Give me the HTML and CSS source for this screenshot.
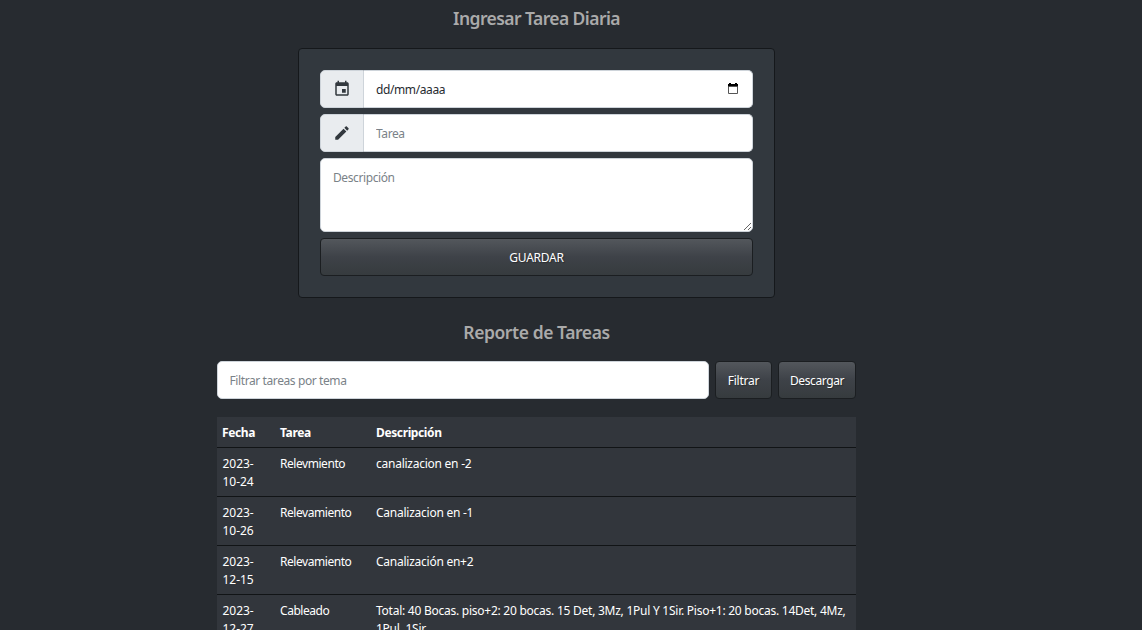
FILE: index.html
```
<!DOCTYPE html>
<html lang="es">
<head>
<meta charset="utf-8">
<title>Tareas</title>
<link rel="stylesheet" href="styles.css">
</head>
<body>
<main class="page">
  <h1 class="title entry">Ingresar Tarea Diaria</h1>
  <form class="card">
    <div class="group">
      <span class="addon"><svg class="icon" viewBox="0 0 24 24"><path d="M17 12h-5v5h5v-5zM16 1v2H8V1H6v2H5c-1.110 0-1.990.9-1.990 2L3 19c0 1.100.890 2 2 2h14c1.100 0 2-.9 2-2V5c0-1.100-.9-2-2-2h-1V1h-2zm3 18H5V8h14v11z"/></svg></span>
      <div class="field date">
        <span class="date-text">dd/mm/aaaa</span>
        <svg class="picker" viewBox="0 0 10 11"><path d="M1 0h2v1h4V0h2v1h1v3H0V1h1z"/><path class="picker-frame" d="M.5 3.500h9v7h-9z"/></svg>
      </div>
    </div>
    <div class="group">
      <span class="addon"><svg class="icon" viewBox="0 0 24 24"><path d="M3 17.250V21h3.750L17.810 9.940l-3.750-3.750L3 17.250zM20.710 7.040c.39-.39.39-1.020 0-1.410l-2.340-2.340c-.39-.39-1.020-.39-1.410 0l-1.830 1.830 3.750 3.750 1.830-1.830z"/></svg></span>
      <input class="field task" type="text" placeholder="Tarea">
    </div>
    <textarea class="field area" placeholder="Descripción"></textarea>
    <button class="btn save" type="button">GUARDAR</button>
  </form>
  <h2 class="title report">Reporte de Tareas</h2>
  <section class="results">
    <div class="filter">
      <input class="field search" type="text" placeholder="Filtrar tareas por tema">
      <button class="btn filter-btn" type="button">Filtrar</button>
      <button class="btn download" type="button">Descargar</button>
    </div>
    <table class="table">
      <colgroup><col class="c-date"><col class="c-task"><col></colgroup>
      <thead><tr><th>Fecha</th><th>Tarea</th><th>Descripción</th></tr></thead>
      <tbody>
        <tr><td>2023-<br>10-24</td><td>Relevmiento</td><td>canalizacion en -2</td></tr>
        <tr><td>2023-<br>10-26</td><td>Relevamiento</td><td>Canalizacion en -1</td></tr>
        <tr><td>2023-<br>12-15</td><td>Relevamiento</td><td>Canalización en+2</td></tr>
        <tr><td>2023-<br>12-27</td><td>Cableado</td><td>Total: 40 Bocas. piso+2: 20 bocas. 15 Det, 3Mz, 1Pul Y 1Sir. Piso+1: 20 bocas. 14Det, 4Mz,<br>1Pul, 1Sir</td></tr>
      </tbody>
    </table>
  </section>
</main>
</body>
</html>
```
FILE: styles.css
```
* { box-sizing: border-box; }
html, body { height: 100%; overflow: hidden; }
body {
  margin: 0;
  background: #272b30;
  color: #fff;
  font: 12px/18px "Segoe UI", "Noto Sans", "Open Sans", sans-serif;
  letter-spacing: -0.25px;
}
.page { width: 1073px; display: flex; flex-direction: column; align-items: center; padding-top: 7px; }
.title { margin: 0; height: 22px; font-size: 17.5px; line-height: 22px; font-weight: 560; color: #aaa; letter-spacing: -0.43px; }
.entry { letter-spacing: -0.57px; }
.card {
  width: 477px; margin-top: 19px; padding: 21px;
  display: flex; flex-direction: column; gap: 6px;
  background: #32383e; border: 1px solid #15181b; border-radius: 4px;
}
.group { display: flex; height: 38px; }
.addon {
  width: 44px; flex: none; display: flex; align-items: center; justify-content: center;
  background: #e9ecef; border: 1px solid #ced4da; border-radius: 5px 0 0 5px;
}
.icon { width: 18px; height: 18px; fill: #32383e; }
.field {
  flex: 1; min-width: 0; height: 38px; padding: 0 12px; display: block;
  background: #fff; color: #272b30; border: 1px solid #ced4da; border-radius: 5px;
  font: inherit; letter-spacing: inherit; outline: 0;
}
.field::placeholder { color: #7a8288; opacity: 1; letter-spacing: -0.4px; }
.group .field { border-left: 0; border-radius: 0 5px 5px 0; }
.group .date { display: flex; align-items: center; justify-content: space-between; padding-top: 2px; letter-spacing: -0.4px; }
.picker { width: 10px; height: 11px; margin: 0 2px 3px 0; }
.picker-frame { fill: none; stroke: #555; }
.area { flex: none; width: 100%; height: 74px; padding: 10px 12px; resize: vertical; }
.btn {
  height: 38px; padding: 2px 0 0; color: #fff; font: inherit; letter-spacing: inherit;
  border: 1px solid #1b1e21; border-radius: 4px;
  background: linear-gradient(#53575c, #3e4248 50%, #363b3e);
  text-shadow: 1px 1px 1px rgba(0, 0, 0, .3);
}
.report { margin-top: 23px; }
.results { width: 639px; margin-top: 18px; }
.filter { display: flex; gap: 6px; }
.search { padding-left: 11.500px; }
.filter-btn { width: 57px; }
.download { width: 78px; letter-spacing: -0.4px; }
.table { width: 100%; margin-top: 18px; table-layout: fixed; border-collapse: separate; border-spacing: 0; background: #32363c; }
.c-date { width: 58px; }
.c-task { width: 96px; }
th, td { padding: 7px 5px 5px; text-align: left; vertical-align: top; border-bottom: 1px solid #111416; white-space: nowrap; }
th { font-weight: 700; letter-spacing: -0.38px; }
td:first-child { letter-spacing: -0.05px; padding-left: 5.500px; }
td:nth-child(2) { letter-spacing: -0.45px; }
```
